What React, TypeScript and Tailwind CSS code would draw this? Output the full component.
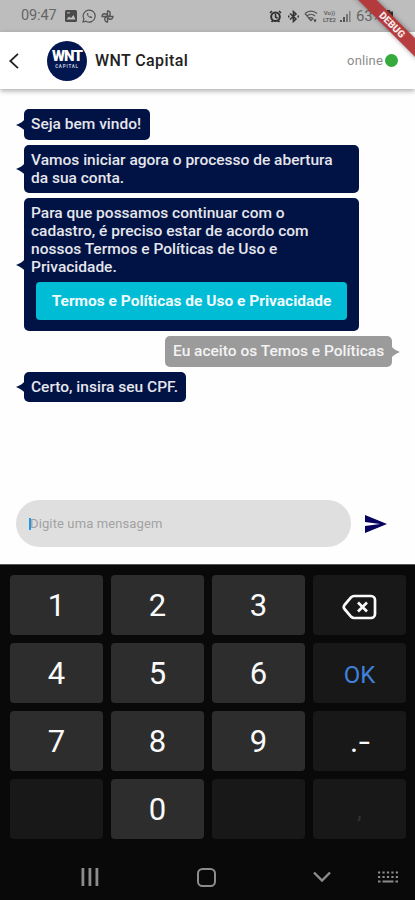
import type { ReactNode } from "react"
import clsx from "clsx"

function StatusBar() {
  return (
    <div className="flex h-8 items-center bg-[#bdbdbd] pl-[21px] text-[#666]">
      <span className="w-[38px] text-[14.500px] tracking-[-0.100px] whitespace-nowrap">09:47</span>
      <svg className="ml-[6px]" width="12" height="12" viewBox="0 0 12 12">
        <rect width="12" height="12" rx="1.5" fill="#4a4a4a" />
        <path d="M1.5 9.5 4 6.5l2 1.5 2.5-3 2 4.5z" fill="#bdbdbd" />
        <rect x="2" y="2" width="3" height="1.5" fill="#999" />
      </svg>
      <svg className="ml-[5px]" width="14" height="14" viewBox="0 0 14 14" fill="none" stroke="#555">
        <path d="M1 13l.9-3A6 6 0 1 1 4 12.2z" strokeWidth="1.2" />
        <path d="M5 4.2c-.8 1.6 2.4 5.3 4.6 4.8l.6-1-1.6-.9-.8.7C6.900 7.400 6.400 6.700 6.100 6l.5-.7-.6-1.300z" fill="#555" stroke="none" />
      </svg>
      <svg className="ml-[5px]" width="13" height="13" viewBox="0 0 13 13" fill="none" stroke="#555" strokeWidth="1.3">
        <path d="M6.5 6.5V1a2.700 2.700 0 0 1 0 5.500M6.500 6.500H12a2.700 2.700 0 0 1-5.500 0M6.500 6.500V12a2.700 2.700 0 0 1 0-5.500M6.500 6.500H1a2.700 2.700 0 0 1 5.500 0" />
      </svg>
      <svg className="ml-[155px]" width="13" height="13" viewBox="0 0 13 13" fill="none" stroke="#2f2f2f" strokeWidth="2">
        <circle cx="6.5" cy="6.7" r="4.3" />
        <path d="M6.500 4v3l2 1.200M1 3l2-2M12 3l-2-2M2.500 12l1.200-1.300M10.500 12l-1.200-1.300" strokeWidth="1.600" />
      </svg>
      <svg className="ml-[6px]" width="11" height="13" viewBox="0 0 11 13" fill="none" stroke="#333" strokeWidth="1.5">
        <path d="M2 3.500l6 5.500-2.600 2.500v-10L8 4 2 9.500" />
        <path d="M0 6.500h1.500M9.500 6.500H11" strokeWidth="1.8" />
      </svg>
      <svg className="ml-[5px]" width="15" height="13" viewBox="0 0 15 13" fill="none" stroke="#555" strokeWidth="1.2">
        <path d="M1 3.500c3.500-3.300 8.500-3.300 12 0M3 6c2.300-2.200 5.700-2.200 8 0M5 8.500c1.300-1 2.700-1 4 0L7 10.600zM1 3.500l6 7" />
        <path d="M9.500 9.500 11 12.500l1.500-3z" fill="#333" stroke="none" />
      </svg>
      <span className="ml-[2px] flex w-[17px] flex-col text-center text-[6px] leading-[7px] font-bold">
        <span>Vo))</span>
        <span>LTE2</span>
      </span>
      <svg className="ml-[2px]" width="11" height="11" viewBox="0 0 11 11" fill="#555">
        <rect y="9" width="2" height="2" />
        <rect x="3" y="6" width="2" height="5" />
        <rect x="6" y="3" width="2" height="8" opacity=".7" />
        <rect x="9" width="1.5" height="11" opacity=".6" />
      </svg>
      <span className="ml-[5px] text-[15px] tracking-[-0.3px]">63%</span>
      <svg className="ml-[1px]" width="9" height="13" viewBox="0 0 9 13" fill="#333">
        <path d="M3 0h3v1.500h3V13H0V1.500h3z" />
      </svg>
    </div>
  )
}

function DebugRibbon() {
  return (
    <div className="absolute top-0 right-0 z-20 size-[70px] overflow-hidden">
      <div className="absolute top-[17.500px] -left-[13px] flex h-[12.700px] w-[120px] rotate-45 items-center justify-center bg-[#b33436]/95 text-[10px] font-black text-[#f5e6e6] shadow-[0_0_5px_rgba(0,0,0,0.4)]">
        <span className="ml-px">DEBUG</span>
      </div>
    </div>
  )
}

function Header() {
  return (
    <header className="relative z-10 flex h-[57px] items-center bg-white pl-[9px] shadow-[0_2px_5px_rgba(0,0,0,0.32)]">
      <svg width="10" height="16" viewBox="0 0 10 16" fill="none" stroke="#222" strokeWidth="1.8">
        <path d="M9 .8 1.300 8 9 15.200" />
      </svg>
      <div className="ml-7 flex size-10 flex-col items-center justify-center rounded-full bg-[#02164f] text-white">
        <span className="-mt-px text-[15px] leading-[12px] font-black tracking-[-1px]">WNT</span>
        <span className="mt-[2px] text-[4.500px] leading-[6px] font-bold tracking-[0.800px] text-[#c4cade]">CAPITAL</span>
      </div>
      <h1 className="ml-2 text-[16px] font-medium tracking-[0.400px] text-[#222]">WNT Capital</h1>
      <span className="ml-auto text-[13px] tracking-[0.150px] text-[#8c8c8c]">online</span>
      <span className="mr-[17px] ml-[2px] size-[13px] rounded-full bg-[#36aa3b]" />
    </header>
  )
}

type BubbleProps = {
  className?: string
  mine?: boolean
  children: ReactNode
}

function Bubble({ className, mine, children }: BubbleProps) {
  return (
    <div
      className={clsx(
        "relative rounded-[5px] px-[7px] pt-[6px] text-[15.500px] leading-[18px] font-medium whitespace-nowrap",
        mine ? "self-end bg-[#9b9b9b] text-[#f3f3f3]" : "self-start bg-[#011345] text-[#e6e6ec]",
        className
      )}
    >
      <svg
        className={clsx("absolute top-1/2 -translate-y-1/2", mine ? "-right-[8px] rotate-180" : "-left-[8px]")}
        width="9"
        height="12"
        viewBox="0 0 9 12"
      >
        <path d="M9 0v12C7 9.500 4 7.500 0 6c4-1.500 7-3.500 9-6z" fill={mine ? "#9b9b9b" : "#011345"} />
      </svg>
      {children}
    </div>
  )
}

function Messages() {
  return (
    <main className="flex h-[411px] flex-col pt-5 pr-[23px] pl-6">
      <Bubble className="h-[31px] w-[126px]">Seja bem vindo!</Bubble>
      <Bubble className="mt-[5px] h-[48px] w-[335px]">
        Vamos iniciar agora o processo de abertura
        <br />
        da sua conta.
      </Bubble>
      <Bubble className="mt-[5px] h-[133px] w-[335px]">
        Para que possamos continuar com o
        <br />
        cadastro, é preciso estar de acordo com
        <br />
        nossos Termos e Políticas de Uso e
        <br />
        Privacidade.
        <button className="mx-[5px] mt-[6px] flex h-[38px] w-[311px] items-center justify-center rounded-[4px] bg-[#00bcd4] text-[15.500px] font-bold text-[#effafc]">
          Termos e Políticas de Uso e Privacidade
        </button>
      </Bubble>
      <Bubble mine className="mt-[5px] h-[31px] w-[227px] pl-[8px]">
        Eu aceito os Temos e Políticas
      </Bubble>
      <Bubble className="mt-[5px] h-[30px] w-[162px]">Certo, insira seu CPF.</Bubble>
    </main>
  )
}

function Composer() {
  return (
    <div className="flex h-[64px] items-start pl-4">
      <div className="flex h-[47px] w-[335px] items-center rounded-full bg-[#dfdfdf] pl-[13px]">
        <span className="h-[12px] w-[2px] bg-[#2196f3]" />
        <span className="-ml-px text-[13px] tracking-[0.120px] text-[#a2a2a2]">Digite uma mensagem</span>
      </div>
      <svg className="mt-[15px] ml-[14px]" width="22" height="18" viewBox="0 0 22 18" fill="#070260">
        <path d="M0 18 22 9 0 0v7l15 2-15 2z" />
      </svg>
    </div>
  )
}

function Backspace() {
  return (
    <svg width="35" height="26" viewBox="0 0 35 26" fill="none" stroke="#fafafa" strokeWidth="2.7">
      <path
        d="M12 2h17a4 4 0 0 1 4 4v14a4 4 0 0 1-4 4H12c-1.200 0-2-.4-2.800-1.200L2.500 15c-1-1.300-1-2.700 0-4l6.700-7.800C10 2.400 10.800 2 12 2z"
        strokeLinejoin="round"
      />
      <path d="m16 8.500 9 9m0-9-9 9" />
    </svg>
  )
}

const keys: { label: ReactNode; className: string }[] = [
  { label: "1", className: "bg-[#2d2d2d]" },
  { label: "2", className: "bg-[#2d2d2d]" },
  { label: "3", className: "bg-[#2d2d2d]" },
  { label: <Backspace />, className: "bg-[#181818]" },
  { label: "4", className: "bg-[#2d2d2d]" },
  { label: "5", className: "bg-[#2d2d2d]" },
  { label: "6", className: "bg-[#2d2d2d]" },
  { label: "OK", className: "bg-[#181818] text-[24px] text-[#3f82dc]" },
  { label: "7", className: "bg-[#2d2d2d]" },
  { label: "8", className: "bg-[#2d2d2d]" },
  { label: "9", className: "bg-[#2d2d2d]" },
  {
    label: (
      <>
        <span>.</span>
        <span className="ml-[2px] scale-x-130">-</span>
      </>
    ),
    className: "bg-[#181818]",
  },
  { label: "", className: "bg-[#181818]" },
  { label: "0", className: "bg-[#2d2d2d]" },
  { label: "", className: "bg-[#181818]" },
  { label: ",", className: "bg-[#181818] text-[22px] text-[#333]" },
]

function Keypad() {
  return (
    <div className="h-[275px] border-t border-[#555] bg-[#090909] px-[10px] pt-[10px]">
      <div className="grid grid-cols-[repeat(4,93px)] grid-rows-[repeat(4,60px)] gap-2">
        {keys.map((key, i) => (
          <div
            key={i}
            className={clsx(
              "flex items-center justify-center rounded-[4px] pt-[3px]",
              !key.className.includes("text-") && "text-[31px] text-[#fafafa]",
              key.className
            )}
          >
            {key.label}
          </div>
        ))}
      </div>
    </div>
  )
}

function NavBar() {
  return (
    <nav className="flex h-[61px] items-center bg-[#090909] pt-[15px] text-[#8c8c8c]">
      <svg className="ml-[81px]" width="18" height="18" viewBox="0 0 18 18" fill="currentColor">
        <rect x="0.5" width="2.8" height="18" />
        <rect x="7.5" width="2.8" height="18" />
        <rect x="14.5" width="2.8" height="18" />
      </svg>
      <svg className="ml-[98px]" width="19" height="19" viewBox="0 0 19 19" fill="none" stroke="currentColor" strokeWidth="2">
        <rect x="1" y="1" width="17" height="17" rx="4.5" />
      </svg>
      <svg className="ml-[97px]" width="18" height="12" viewBox="0 0 18 12" fill="none" stroke="currentColor" strokeWidth="2.4">
        <path d="m1 1.500 8 8 8-8" />
      </svg>
      <svg className="ml-[47px]" width="20" height="12" viewBox="0 0 20 12" fill="none" stroke="currentColor" strokeWidth="2">
        <path d="M0 1.500h20M0 6h20" strokeDasharray="2.200 2.250" />
        <path d="M0 10.500h2.500M4.500 10.500h11M17.500 10.500H20" />
      </svg>
    </nav>
  )
}

export default function App() {
  return (
    <div className="relative h-[900px] w-[415px] overflow-hidden bg-[#fefefe] font-['Roboto',sans-serif]">
      <StatusBar />
      <Header />
      <Messages />
      <Composer />
      <Keypad />
      <NavBar />
      <DebugRibbon />
    </div>
  )
}
